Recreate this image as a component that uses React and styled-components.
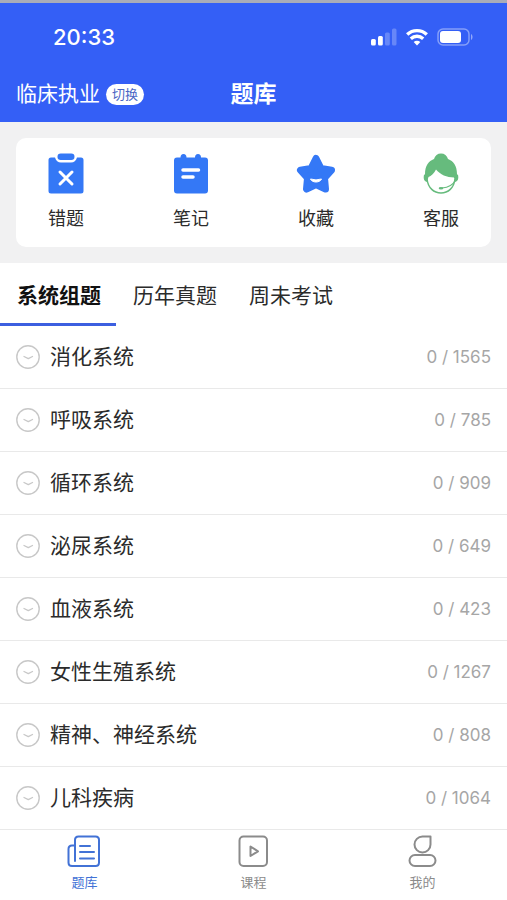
import React, { useState } from "react";
import styled, { createGlobalStyle } from "styled-components";

const GlobalStyle = createGlobalStyle`
  * { box-sizing: border-box; }
  body {
    margin: 0;
    background: #fff;
    color: #2b2b2b;
    font-family: Inter, "Noto Sans CJK SC", sans-serif;
  }
  button { font: inherit; color: inherit; background: none; border: 0; padding: 0; cursor: pointer; }
`;

const Page = styled.div`
  display: flex;
  flex-direction: column;
  min-height: 100vh;
`;

const Header = styled.header`
  border-top: 3px solid #a9acb8;
  background: #345ff6;
  color: #fff;
`;

const StatusBar = styled.div`
  display: flex;
  align-items: center;
  justify-content: space-between;
  height: 68px;
  padding: 0 34px 0 53px;
`;

const Time = styled.time`
  font-size: 22px;
  font-weight: 500;
  line-height: 28px;
`;

const StatusIcons = styled.div`
  display: flex;
  align-items: center;
  gap: 9px;
`;

const TitleBar = styled.div`
  display: grid;
  grid-template-columns: 1fr auto 1fr;
  align-items: center;
  height: 51px;
  padding: 0 16px 5px;
`;

const Subject = styled.div`
  display: flex;
  align-items: center;
  gap: 6px;
  font-size: 21px;
  line-height: 30px;
`;

const SwitchButton = styled.button`
  && {
    height: 21px;
    padding: 0 6px;
    border-radius: 11px;
    background: #fff;
    color: #4a66c4;
    font-size: 13px;
    line-height: 21px;
  }
`;

const Title = styled.h1`
  margin: 0;
  font-size: 23px;
  font-weight: 700;
  line-height: 32px;
`;

const ShortcutArea = styled.section`
  padding: 16px;
  background: #f1f1f2;
`;

const ShortcutCard = styled.div`
  display: flex;
  justify-content: space-between;
  padding: 14px 32px;
  border-radius: 10px;
  background: #fff;
`;

const Shortcut = styled.button`
  display: flex;
  flex-direction: column;
  align-items: center;
  gap: 9px;
  width: 36px;
  white-space: nowrap;

  && { font-size: 18px; line-height: 28px; }
  svg { display: block; width: 44px; height: 44px; flex: none; }
`;

const TabList = styled.div`
  display: flex;
`;

const Tab = styled.button`
  && {
    height: 63px;
    padding: 5px 15px 0 17px;
    border-bottom: 3px solid ${(p) => (p.$active ? "#3c5fe0" : "transparent")};
    color: ${(p) => (p.$active ? "#111" : "#2b2b2b")};
    font-size: 21px;
    font-weight: ${(p) => (p.$active ? 700 : 400)};
    line-height: 30px;
  }
`;

const Chapters = styled.ul`
  margin: 0;
  padding: 0;
  list-style: none;
`;

const Chapter = styled.li`
  border-bottom: 1px solid #e9e9e9;
`;

const ChapterButton = styled.button`
  display: flex;
  align-items: center;
  width: 100%;
  height: 62px;

  && { padding: 0 16px; text-align: left; }
  svg { flex: none; }
`;

const ChapterName = styled.span`
  flex: 1;
  margin-left: 10px;
  font-size: 21px;
  line-height: 30px;
`;

const Progress = styled.span`
  color: #a6a6a6;
  font-size: 17px;
  line-height: 24px;
`;

const BottomNav = styled.nav`
  display: grid;
  grid-template-columns: repeat(3, 1fr);
  margin-top: auto;
  padding: 3px 0 9px;
`;

const NavLink = styled.a`
  display: flex;
  flex-direction: column;
  align-items: center;
  gap: 3px;
  color: ${(p) => (p.$active ? "#4272d6" : "#8b8b8b")};
  font-size: 13px;
  line-height: 20px;
  text-decoration: none;
  svg { display: block; }
`;

const Signal = () => (
  <svg width="26" height="18" viewBox="0 0 26 18" fill="#fff" aria-hidden="true">
    <rect x="0" y="11" width="4.800" height="6.500" rx="1.500" />
    <rect x="7" y="8" width="4.800" height="9.500" rx="1.500" />
    <rect x="14" y="4.500" width="4.800" height="13" rx="1.500" opacity=".25" />
    <rect x="21" y="0.500" width="4.500" height="17" rx="1.500" opacity=".25" />
  </svg>
);

const Wifi = () => (
  <svg width="22" height="18" viewBox="0 0 22 18" fill="none" stroke="#fff" strokeWidth="3.400" aria-hidden="true">
    <path d="M1.200 6.500C6.700 1.300 15.300 1.300 20.800 6.500" />
    <path d="M4.800 10.700C8.400 7.500 13.600 7.500 17.200 10.700" />
    <path d="M11 17.500 7.700 14C9.600 12.200 12.400 12.200 14.300 14Z" fill="#fff" stroke="none" />
  </svg>
);

const Battery = () => (
  <svg width="36" height="18" viewBox="0 0 36 18" aria-hidden="true">
    <rect x="1" y="1" width="31" height="16" rx="5" fill="none" stroke="#fff" strokeOpacity=".4" strokeWidth="1.500" />
    <rect x="3" y="3" width="21" height="12" rx="3" fill="#fff" />
    <path d="M34 6c2 .7 2 5.300 0 6Z" fill="#fff" opacity=".45" />
  </svg>
);

const MistakeIcon = () => (
  <svg viewBox="0 0 44 44" aria-hidden="true">
    <path d="M7 5.500h4C12 9 14 10.500 17 10.500h10c3 0 5-1.500 6-5h4q2.500 0 2.500 2.500v31q0 2.500-2.500 2.500H7q-2.500 0-2.500-2.500V8q0-2.500 2.500-2.500Z" fill="#3478f6" />
    <rect x="13.500" y="1.500" width="17" height="6.500" rx="3.200" fill="#3478f6" />
    <path d="m16 20 12 12M28 20 16 32" stroke="#fff" strokeWidth="3" strokeLinecap="round" />
  </svg>
);

const NotesIcon = () => (
  <svg viewBox="0 0 44 44" aria-hidden="true">
    <path d="M8 5.500h3.500a3 3.500 0 0 1 6 0h8.500a3 3.500 0 0 1 6 0H36q3 0 3 3v30q0 3-3 3H8q-3 0-3-3v-30q0-3 3-3Z" fill="#3478f6" />
    <path d="M14 18h15.500M14 25h10" stroke="#fff" strokeWidth="3.500" strokeLinecap="round" />
  </svg>
);

const StarIcon = () => (
  <svg viewBox="0 0 44 44" aria-hidden="true">
    <path d="M22 6.500 27 16.500 37.500 18.200 30.500 26 31.500 37 22 32.500 12.500 37 13.500 26 6.500 18.200 17 16.500Z" fill="#3478f6" stroke="#3478f6" strokeWidth="7" strokeLinejoin="round" />
    <path d="M16.500 27q5.500 1.800 11 0c-1.500 4-9.500 4-11 0Z" fill="#fff" stroke="#fff" strokeLinejoin="round" />
  </svg>
);

const ServiceIcon = () => (
  <svg viewBox="0 0 44 44" aria-hidden="true">
    <path d="M8 27C9 36 15 41 22 41s13-5 14-14" fill="#fff" stroke="#66bb7d" strokeWidth="1.500" />
    <path d="M8 30Q4 29 4.800 23.500L6 22C6 14 9.500 9 15 7 16 3.500 18.500 1.500 22 1.500S28 3.500 29 7C34.500 9 38 14 38 22l1.200 1.500Q40 29 36 30L35 25.500C28 25.500 21 22.500 17 17.500 15.500 21 12 24 9.500 25Z" fill="#66bb7d" />
    <path d="M36.500 28C34 33 29 35.500 23 36" fill="none" stroke="#66bb7d" strokeWidth="1.100" />
    <ellipse cx="22" cy="36.200" rx="2.300" ry="1.300" fill="#66bb7d" />
  </svg>
);

const ExpandIcon = () => (
  <svg width="24" height="24" viewBox="0 0 24 24" fill="none" stroke="#c8c8c8" aria-hidden="true">
    <circle cx="12" cy="12" r="11.200" strokeWidth="1.400" />
    <path d="m8 11.500 4.300 2.200 4.200-2.200" strokeWidth="1.300" strokeLinecap="round" strokeLinejoin="round" />
  </svg>
);

const BankIcon = () => (
  <svg width="36" height="36" viewBox="0 0 36 36" fill="none" stroke="currentColor" strokeWidth="2" strokeLinecap="round" strokeLinejoin="round" aria-hidden="true">
    <path d="M8 28V7q0-3.500 3.500-3.500h17Q32 3.500 32 7v22.500q0 3.500-3.500 3.500H5q-3.500 0-3.500-3.500V16q0-3.500 3.500-3.500h3" />
    <path d="M13 13h10M13 19h14M13 25.500h14" />
  </svg>
);

const CourseIcon = () => (
  <svg width="36" height="36" viewBox="0 0 36 36" fill="none" stroke="currentColor" strokeWidth="2" strokeLinejoin="round" aria-hidden="true">
    <rect x="3.500" y="3.500" width="27.500" height="29.500" rx="4" />
    <path d="M14.500 13.500v9.500l7.500-4.700Z" />
  </svg>
);

const MineIcon = () => (
  <svg width="36" height="36" viewBox="0 0 36 36" fill="none" stroke="currentColor" strokeWidth="2" strokeLinejoin="round" aria-hidden="true">
    <path d="M25.500 3.500v8a8 8 0 1 1-8-8Z" />
    <rect x="4.500" y="22" width="26" height="11" rx="5.500" />
  </svg>
);

const shortcuts = [
  { label: "错题", Icon: MistakeIcon },
  { label: "笔记", Icon: NotesIcon },
  { label: "收藏", Icon: StarIcon },
  { label: "客服", Icon: ServiceIcon },
];

const tabs = ["系统组题", "历年真题", "周未考试"];

const chapters = [
  ["消化系统", 1565],
  ["呼吸系统", 785],
  ["循环系统", 909],
  ["泌尿系统", 649],
  ["血液系统", 423],
  ["女性生殖系统", 1267],
  ["精神、神经系统", 808],
  ["儿科疾病", 1064],
];

const navItems = [
  { label: "题库", Icon: BankIcon, href: "#bank" },
  { label: "课程", Icon: CourseIcon, href: "#course" },
  { label: "我的", Icon: MineIcon, href: "#mine" },
];

export default function App() {
  const [tab, setTab] = useState(0);
  return (
    <Page>
      <GlobalStyle />
      <Header>
        <StatusBar>
          <Time>20:33</Time>
          <StatusIcons>
            <Signal />
            <Wifi />
            <Battery />
          </StatusIcons>
        </StatusBar>
        <TitleBar>
          <Subject>
            临床执业
            <SwitchButton type="button">切换</SwitchButton>
          </Subject>
          <Title>题库</Title>
        </TitleBar>
      </Header>
      <ShortcutArea>
        <ShortcutCard>
          {shortcuts.map(({ label, Icon }) => (
            <Shortcut type="button" key={label}>
              <Icon />
              {label}
            </Shortcut>
          ))}
        </ShortcutCard>
      </ShortcutArea>
      <TabList role="tablist">
        {tabs.map((label, i) => (
          <Tab key={label} type="button" role="tab" aria-selected={tab === i} $active={tab === i} onClick={() => setTab(i)}>
            {label}
          </Tab>
        ))}
      </TabList>
      <Chapters>
        {chapters.map(([name, total]) => (
          <Chapter key={name}>
            <ChapterButton type="button">
              <ExpandIcon />
              <ChapterName>{name}</ChapterName>
              <Progress>0 / {total}</Progress>
            </ChapterButton>
          </Chapter>
        ))}
      </Chapters>
      <BottomNav>
        {navItems.map(({ label, Icon, href }, i) => (
          <NavLink key={label} href={href} $active={i === 0} aria-current={i === 0 ? "page" : undefined}>
            <Icon />
            {label}
          </NavLink>
        ))}
      </BottomNav>
    </Page>
  );
}
